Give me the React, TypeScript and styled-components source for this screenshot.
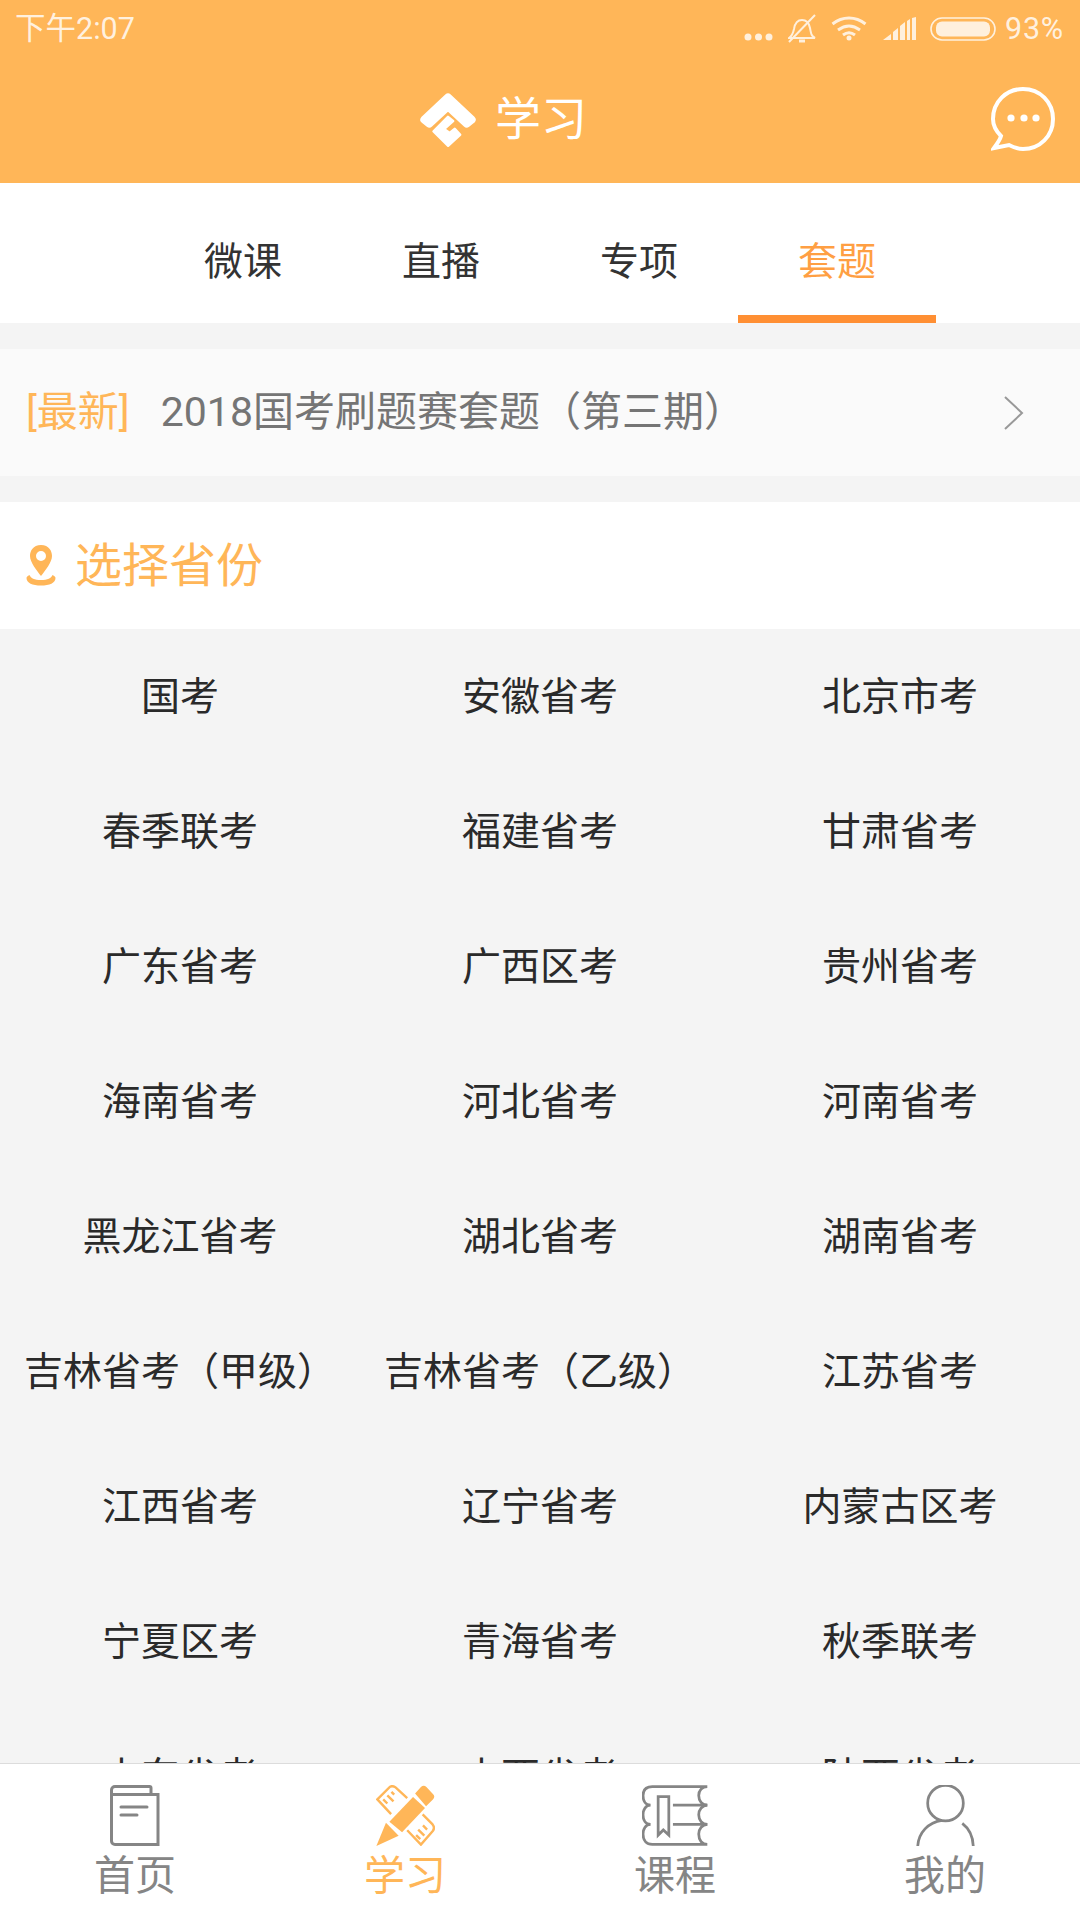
import React from 'react';
import styled, { createGlobalStyle } from 'styled-components';

const Global = createGlobalStyle`
  html, body { margin: 0; padding: 0; background: #f4f4f4; }
  * { box-sizing: border-box; }
`;
const ORANGE = '#ffb658';
const FONT = `Roboto, "Noto Sans CJK SC", sans-serif`;

const Page = styled.div`
  width: 1080px; height: 1920px; display: flex; flex-direction: column; overflow: hidden;
  background: #f4f4f4; font-family: ${FONT};
`;
const Header = styled.header`
  height: 183px; background: ${ORANGE}; color: #fff; flex: none; display: flex; flex-direction: column;
`;
const StatusBar = styled.div`
  height: 57px; display: flex; align-items: center; padding: 0 16px 0 15px; color: rgba(255,255,255,.82);
  font-size: 30.500px; line-height: 57px;
`;
const StatusTime = styled.span` flex: 1; `;
const StatusIcons = styled.div` display: flex; align-items: center; height: 57px; `;
const StatusIcon = styled.svg<{ $gap: number; $top?: number }>`
  display: block; flex: none; margin-left: ${p => p.$gap}px; margin-top: ${p => p.$top ?? 0}px;
`;
const StatusPct = styled.span` margin-left: 9px; letter-spacing: 0.8px; `;
const NavBar = styled.div`
  flex: 1; display: grid; grid-template-columns: 1fr auto 1fr; align-items: center; padding: 0 25px 2px 0;
`;
const Brand = styled.div` grid-column: 2; display: flex; align-items: center; gap: 17px; margin-right: 50px; `;
const BrandTitle = styled.span` font-size: 46px; line-height: 60px; `;
const ChatButton = styled.svg` justify-self: end; display: block; `;

const Tabs = styled.nav`
  height: 140px; background: #fff; display: grid; grid-template-columns: repeat(4, 198px);
  justify-content: center; flex: none;
`;
const Tab = styled.div<{ $active?: boolean }>`
  display: flex; align-items: center; justify-content: center; font-size: 39px; padding-top: 18px;
  color: ${p => (p.$active ? '#ff9f43' : '#333')};
  border-bottom: 8px solid ${p => (p.$active ? '#ff8f33' : 'transparent')};
`;
const Banner = styled.div`
  margin-top: 26px; height: 127px; background: #fafafa; display: flex; align-items: center;
  padding: 0 55px 0 26px; flex: none; font-size: 41px;
`;
const BannerTag = styled.span` color: ${ORANGE}; margin-top: -10px; `;
const BannerText = styled.span` color: #757575; flex: 1; margin: -10px 0 0 31px; `;
const SectionHead = styled.div`
  margin-top: 26px; height: 127px; background: #fff; display: flex; align-items: center;
  padding-left: 26px; gap: 19px; flex: none; color: ${ORANGE}; font-size: 47px;
`;
const SectionTitle = styled.span` margin-top: -8px; `;
const List = styled.div`
  flex: 1; min-height: 0; overflow: hidden; display: grid; grid-template-columns: repeat(3, 360px);
  grid-auto-rows: 135px; align-content: start;
`;
const Item = styled.div`
  display: flex; align-items: center; justify-content: center; font-size: 39px; color: #2a2a2a;
  white-space: nowrap; padding-bottom: 7px;
`;
const BottomBar = styled.footer`
  height: 157px; flex: none; background: #fff; border-top: 1px solid #dcdcdc;
  display: grid; grid-template-columns: repeat(4, 270px);
`;
const BottomItem = styled.div<{ $active?: boolean }>`
  display: flex; flex-direction: column; align-items: center; padding-top: 21px;
  color: ${p => (p.$active ? ORANGE : '#858585')};
`;
const BottomIcon = styled.svg` display: block; height: 61px; `;
const BottomLabel = styled.span` font-size: 41px; line-height: 48px; margin-top: 6px; `;

const rows = [
  '国考','安徽省考','北京市考','春季联考','福建省考','甘肃省考','广东省考','广西区考','贵州省考',
  '海南省考','河北省考','河南省考','黑龙江省考','湖北省考','湖南省考','吉林省考（甲级）','吉林省考（乙级）','江苏省考',
  '江西省考','辽宁省考','内蒙古区考','宁夏区考','青海省考','秋季联考','山东省考','山西省考','陕西省考',
];

export default function App() {
  const st = '#fff';
  return (
    <Page>
      <Global />
      <Header>
        <StatusBar>
          <StatusTime>下午2:07</StatusTime>
          <StatusIcons>
            <StatusIcon $gap={0} $top={16} width="29" height="10" viewBox="0 0 29 10"><g fill={st} opacity=".8"><circle cx="4" cy="5" r="3.5"/><circle cx="14.500" cy="5" r="3.500"/><circle cx="25" cy="5" r="3.500"/></g></StatusIcon>
            <StatusIcon $gap={15} width="28" height="30" viewBox="0 0 28 30"><g fill="none" stroke={st} strokeWidth="2" opacity=".8"><path d="M1 24c3-2 4-4 5-9 1-6 4-9 8-9s7 3 8 8c1 5 1 8 5 10H1z"/><path d="M1 28L27 1"/><path d="M11 27h6" strokeWidth="3"/></g></StatusIcon>
            <StatusIcon $gap={15} width="36" height="25" viewBox="0 0 36 25"><g fill="none" stroke={st} strokeWidth="3" opacity=".8"><path d="M1.500 8c10-8 23-8 33 0"/><path d="M7 14c7-5 15-5 22 0"/><path d="M12 19c4-3 8-3 12 0" /></g><circle cx="18" cy="22" r="2.500" fill={st} opacity=".8"/></StatusIcon>
            <StatusIcon $gap={16} width="34" height="23" viewBox="0 0 34 23"><path fill={st} opacity=".8" d="M0 23l8-6v6H0zM10 15l5-4v12h-5V15zM17 9l5-4v18h-5V9zM24 4l3-2v21h-3V4zM29 1l4-1v23h-4V1z"/></StatusIcon>
            <StatusIcon $gap={13} width="66" height="24" viewBox="0 0 66 24"><rect x="1" y="1" width="64" height="22" rx="11" fill="none" stroke={st} strokeWidth="1.600" opacity=".8"/><rect x="6" y="4.500" width="54" height="15" rx="6" fill={st} opacity=".8"/></StatusIcon>
            <StatusPct>93%</StatusPct>
          </StatusIcons>
        </StatusBar>
        <NavBar>
          <Brand>
            <svg width="60" height="56" viewBox="0 0 180 166">
              <path fill="#fff" stroke="#fff" strokeWidth="24" strokeLinejoin="round" d="M90 18L161 85L146 97L90 45L34 97L19 85Z"/>
              <path fill="#fff" stroke="#fff" strokeWidth="8" strokeLinejoin="round" d="M47 120L90 77L105 89L78 113L95 125L110 113L126 130L90 163Z"/>
            </svg>
            <BrandTitle>学习</BrandTitle>
          </Brand>
          <ChatButton width="64" height="64" viewBox="0 0 64 64">
            <path fill="none" stroke="#fff" strokeWidth="4" d="M10 49C5 44 2 38 2 32 2 15 15 2 32 2s30 13 30 30-13 30-30 30c-5 0-10-2-14-4L3 61c3-4 6-8 7-12z"/>
            <circle cx="20" cy="31" r="3.600" fill="#fff"/><circle cx="33" cy="31" r="3.600" fill="#fff"/><circle cx="45" cy="31" r="3.600" fill="#fff"/>
          </ChatButton>
        </NavBar>
      </Header>
      <Tabs>
        <Tab>微课</Tab><Tab>直播</Tab><Tab>专项</Tab><Tab $active>套题</Tab>
      </Tabs>
      <Banner>
        <BannerTag>[最新]</BannerTag>
        <BannerText>2018国考刷题赛套题（第三期）</BannerText>
        <svg width="22" height="36" viewBox="0 0 22 36"><path d="M2 2l17 16L2 34" fill="none" stroke="#999" strokeWidth="2"/></svg>
      </Banner>
      <SectionHead>
        <svg width="30" height="41" viewBox="0 0 30 41">
          <path fill={ORANGE} fillRule="evenodd" d="M15 0C7 0 4 6 4 11c0 6 7 15 11 20 4-5 11-14 11-20C26 6 23 0 15 0zm0 6a5 5 0 110 10 5 5 0 010-10z"/>
          <path fill={ORANGE} d="M0.500 33c0 5 6 7.500 14.500 7.500s14.500-2.500 14.500-7.500c0-1-1-2-3-3-1 3-5 5-11.500 5s-10.500-2-11.500-5c-2 1-3 2-3 3z"/>
        </svg>
        <SectionTitle>选择省份</SectionTitle>
      </SectionHead>
      <List>
        {rows.map(r => <Item key={r}>{r}</Item>)}
      </List>
      <BottomBar>
        <BottomItem>
          <BottomIcon width="50" viewBox="0 0 50 61"><g fill="none" stroke="#858585" strokeWidth="3"><path d="M41 9V3c0-1-.500-1.500-1.500-1.500H5C3 1.500 1.500 3 1.500 5v51c0 2 1.500 3.500 3.500 3.500h43V9.500H3"/><path d="M11 22h26M11 30h16" strokeLinecap="round"/></g></BottomIcon>
          <BottomLabel>首页</BottomLabel>
        </BottomItem>
        <BottomItem $active>
          <BottomIcon width="59" viewBox="0 0 170 178">
            <g fill={ORANGE}>
              <path d="M38 107L107 35L142 67L75 138Z"/>
              <path d="M113 25L130 6Q138 -2 146 6L165 26Q173 34 165 42L145 62Z"/>
              <path d="M28 110L65 148L0 178Z"/>
            </g>
            <g fill="none" stroke={ORANGE} strokeWidth="7">
              <path d="M43 85L3 42L40 5Q48 1 56 7L90 38"/>
              <path d="M135 86L164 115Q172 125 164 135L130 174L90 132"/>
              <path d="M20 42L32 54M32 30L50 48M44 20L52 28"/>
              <path d="M116 146L128 158M122 130L140 148M136 118L148 130"/>
            </g>
          </BottomIcon>
          <BottomLabel>学习</BottomLabel>
        </BottomItem>
        <BottomItem>
          <BottomIcon width="66" viewBox="0 0 192 176"><g fill="none" stroke="#858585" strokeWidth="8"><path d="M190 4H30C10 4 3 15 3 30c0 15 7 28 22 28C10 58 3 72 3 86c0 15 7 28 22 28-15 0-22 14-22 28 0 18 10 30 27 30H190C175 172 165 160 165 142c0-14 10-28 25-28-15 0-25-13-25-28 0-14 10-28 25-28-15 0-25-13-25-28 0-15 10-26 25-26"/><path d="M90 58H190M90 114H190"/><path d="M47 33H78V145L62 130 47 145Z"/></g></BottomIcon>
          <BottomLabel>课程</BottomLabel>
        </BottomItem>
        <BottomItem>
          <BottomIcon width="59" viewBox="0 0 170 178"><g fill="none" stroke="#858585" strokeWidth="8"><circle cx="85" cy="53" r="52"/><path d="M4 178C6 140 35 108 75 103"/><path d="M134 112C155 128 165 150 166 178"/></g></BottomIcon>
          <BottomLabel>我的</BottomLabel>
        </BottomItem>
      </BottomBar>
    </Page>
  );
}
